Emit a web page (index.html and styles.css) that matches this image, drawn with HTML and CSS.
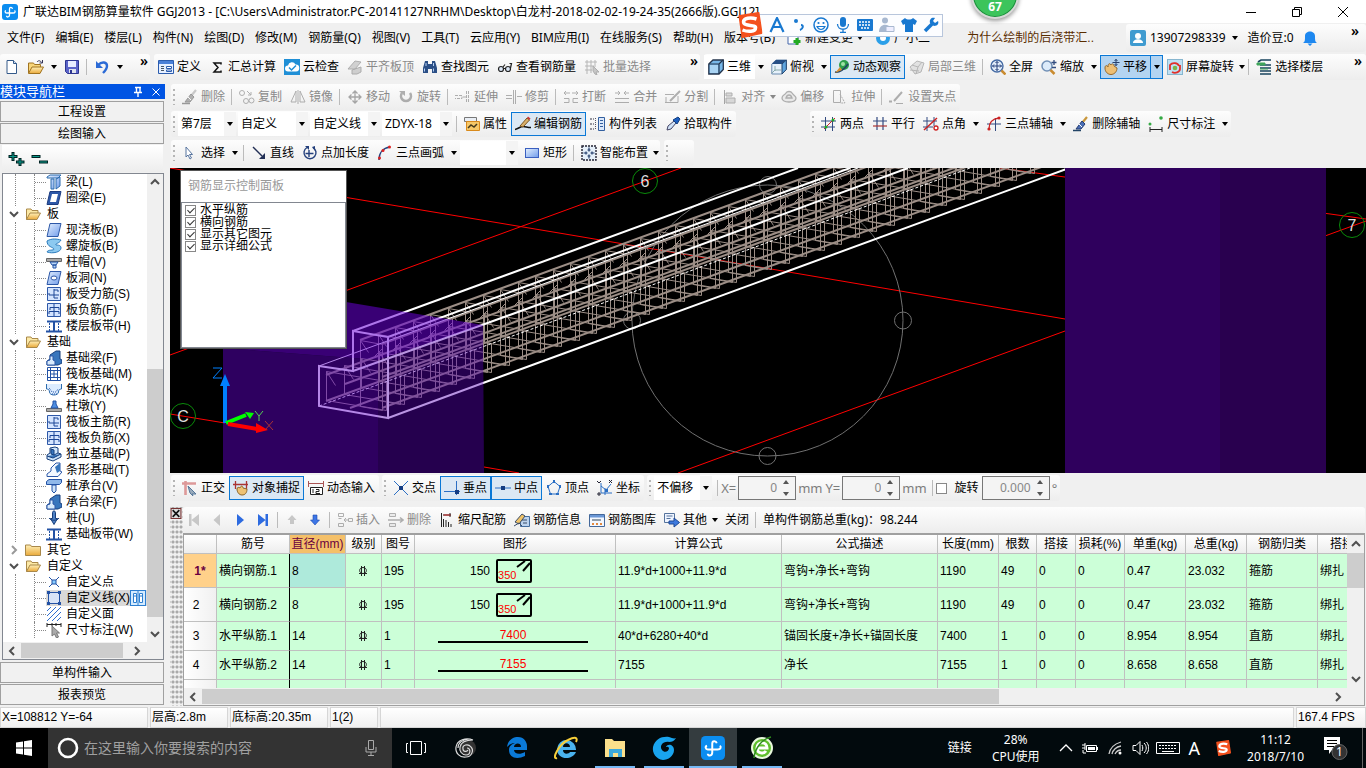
FILE: index.html
```html
<!DOCTYPE html>
<html lang="zh-CN">
<head>
<meta charset="utf-8">
<title>广联达BIM钢筋算量软件 GGJ2013</title>
<link rel="stylesheet" href="styles.css">
</head>
<body>
<svg class="defs" aria-hidden="true">
<defs>
<linearGradient id="gb" x1="0" y1="0" x2="1" y2="1"><stop offset="0" stop-color="#e4f0ff"/><stop offset="1" stop-color="#6f9bea"/></linearGradient>
<linearGradient id="gy" x1="0" y1="0" x2="0" y2="1"><stop offset="0" stop-color="#fff0b8"/><stop offset="1" stop-color="#e9a93a"/></linearGradient>
<symbol id="logo" viewBox="0 0 16 16"><rect width="16" height="16" rx="3" fill="#0b8df0"/><path d="M10.500 4.800C10 3 7.500 3 7.500 5v6c0 2.500-3 2.500-3 .8M4 6.500C2.500 7 3 9 4.500 9H11c2.500 0 2.500-2 1.500-2.500" fill="none" stroke="#fff" stroke-width="1.300"/></symbol>
<symbol id="new" viewBox="0 0 16 16"><path d="M3 1.500h6.500l3 3v10H3z" fill="#fff" stroke="#345a8a"/><path d="M9.500 1.500v3h3" fill="#cfe0f5" stroke="#345a8a"/></symbol>
<symbol id="open" viewBox="0 0 16 16"><path d="M.5 14V4h5l1 1.500h6V8" fill="#f7d57a" stroke="#a07320"/><path d="M.5 14.500L4 8h11.500L12 14.500z" fill="url(#gy)" stroke="#a07320"/><path d="M9 3c1.500-2 3.500-1.500 4.500.5M14.500 1v3h-3" fill="none" stroke="#335"/></symbol>
<symbol id="save" viewBox="0 0 16 16"><path d="M1.500 1.500h13v13h-11l-2-2z" fill="#5b63c8" stroke="#2d3590"/><path d="M4 2h8v6H4z" fill="#e8ecff"/><path d="M5 10h7v4H5z" fill="#dfe3ee"/><path d="M6 11h2v3H6z" fill="#2d3590"/></symbol>
<symbol id="undo" viewBox="0 0 16 16"><path d="M4 6c4-4 9-3 9 1 0 3-2 5-4 7" fill="none" stroke="#2c6bd6" stroke-width="2.400"/><path d="M2 2v7h7z" fill="#2c6bd6"/></symbol>
<symbol id="define" viewBox="0 0 16 16"><path d="M.5 1.500h15v13H.5z" fill="#e6efff" stroke="#2b5cae"/><path d="M1 2h14v3H1z" fill="#4a80d8"/><path d="M3 7.500h3M3 9.500h3M3 11.500h3" stroke="#456"/><path d="M8.500 7.500h5v2h-5zM8.500 11h5v1.500h-5z" fill="#fff" stroke="#2b5cae"/></symbol>
<symbol id="sigma" viewBox="0 0 16 16"><path d="M12 5.500V4H5l4 4.500L5 13h7v-1.500" fill="none" stroke="#111" stroke-width="1.500"/></symbol>
<symbol id="cloud" viewBox="0 0 16 16"><rect width="16" height="16" fill="#1f8fd6"/><path d="M4 12.500a3 3 0 0 1 0-6 4 4 0 0 1 7.500-1A3.500 3.500 0 0 1 12 12.500z" fill="#fff"/><path d="M5 8.500l2.500 2.500L12 6.500" fill="none" stroke="#1f8fd6" stroke-width="1.500"/></symbol>
<symbol id="slab" viewBox="0 0 16 16"><path d="M1 10l7-8 6 1-6 7zM5 15v-4l9-3v5l-4 2z" fill="#aaa" stroke="#666"/></symbol>
<symbol id="find" viewBox="0 0 16 16"><path d="M3 2h3v3h4V2h3l2 7v5h-5v-4H6v4H1V9z" fill="#2b4f86"/><path d="M2.500 9.500v3M11.500 9.500v3M4 4v3M11.500 4v3" stroke="#b5d0f5"/></symbol>
<symbol id="glass" viewBox="0 0 16 16"><g fill="#dce8f8" stroke="#222" stroke-width="1.200"><circle cx="4" cy="10" r="2.500"/><circle cx="11" cy="10" r="2.500"/><path d="M6.500 9.500h2M13.500 9l1-4.500h-2M6 8l2-2.500" fill="none"/></g></symbol>
<symbol id="batch" viewBox="0 0 16 16"><path d="M1 3h12M1 7h9M1 11h7M3 1v14M7 1v13M11 1v7" stroke="#777"/><path d="M9 7l6 6-3 0 1 3-2-1-2-3z" fill="#999" stroke="#666"/></symbol>
<symbol id="cube" viewBox="0 0 16 16"><path d="M.8 5L5 1h10.300v9.500L11 15H.8z" fill="#78b7e8" stroke="#24344c" stroke-width="1.300"/><path d="M1 5h10v10M11 5l4-4" fill="none" stroke="#24344c" stroke-width="1.200"/><path d="M2 6h8v8H2z" fill="#a9d3f3"/></symbol>
<symbol id="topv" viewBox="0 0 16 16"><path d="M.8 5L5 1h10.300v9.500L11 15H.8z" fill="#e6f1fb" stroke="#6a8aae"/><path d="M.8 5L5 1h10.300L11 5z" fill="#264f86"/><path d="M11 5l4.300-4v9.500L11 15z" fill="#5fa5df" stroke="#24446c"/><path d="M4 12V7m-3 7l3-3h6" stroke="#8aa" fill="none"/></symbol>
<symbol id="orbit" viewBox="0 0 16 16"><circle cx="10" cy="6" r="5" fill="#2e9e4c"/><circle cx="9" cy="5" r="2" fill="#9fe2a4"/><path d="M1 13c4 1 10-3 13-8" stroke="#246" fill="none" stroke-width="1.500"/><path d="M1 14l5-6 2 3z" fill="#d98f2f"/></symbol>
<symbol id="local3" viewBox="0 0 16 16"><path d="M1 8l7-6 7 2-3 9-6 2z" fill="#ccc" stroke="#777"/><path d="M3 6l6 2 4-5M9 8l-2 7M1 11l9 1" fill="none" stroke="#777"/></symbol>
<symbol id="full" viewBox="0 0 16 16"><circle cx="7" cy="7" r="6" fill="#e4effb" stroke="#456ba4" stroke-width="1.400"/><path d="M7 2.500v9M2.500 7h9M5.500 4L7 2.500 8.500 4M5.500 10L7 11.500 8.500 10M4 5.500L2.500 7 4 8.500M10 5.500L11.500 7 10 8.500" stroke="#223c78" fill="none"/><path d="M11.500 11.500l4 4" stroke="#c98b2f" stroke-width="2.500"/></symbol>
<symbol id="zoom" viewBox="0 0 16 16"><circle cx="6" cy="7" r="5" fill="#dcebfa" stroke="#7291b7" stroke-width="1.500"/><path d="M9.500 11l4 4" stroke="#c98b2f" stroke-width="2.500"/><path d="M13 1v5M10.500 3.500h5M11 8.500h4" stroke="#334d80" stroke-width="1.300"/></symbol>
<symbol id="pan" viewBox="0 0 16 16"><path d="M1 9c0-3 2-3 3-1 0-4 2-4 3-2 1-2 3-1 3 1l3 2c0 4-3 6.500-6 6.500S1 13 1 9z" fill="#edbf74" stroke="#95692b"/><path d="M12 0v7M8.500 3.500h7M10.500 2L12 .5 13.500 2M10.500 5L12 6.500 13.500 5" stroke="#27406c" fill="none"/></symbol>
<symbol id="srot" viewBox="0 0 16 16"><rect x=".5" y=".5" width="15" height="15" fill="#bfe0f3" stroke="#87b6cf"/><path d="M3 11V6a5 4 0 0 1 9 1M13 6v4a5 4 0 0 1-8 3" fill="none" stroke="#e2302a" stroke-width="1.800"/><circle cx="8" cy="9" r="2.300" fill="#7ab648"/></symbol>
<symbol id="floors" viewBox="0 0 16 16"><path d="M2 3l3-2h10M4 6h11M4 9h11M4 12h11M4 15h11" stroke="#19445e" stroke-width="1.600" fill="none"/><path d="M1 4h8v2H1zM4 10h8" fill="#3fa55a" stroke="#3fa55a"/></symbol>
<symbol id="brush" viewBox="0 0 16 16"><path d="M14 1l-5 6" stroke="#c9973b" stroke-width="2.200"/><path d="M9 5l3 3-4 5H3z" fill="#4b6fb5" stroke="#243b70"/><path d="M6 8l3 3" stroke="#fff"/><path d="M0 14.500h8" stroke="#246" stroke-width="1.500"/></symbol>
<symbol id="copy" viewBox="0 0 16 16"><g fill="none" stroke="#666"><circle cx="3" cy="4" r="2.500"/><circle cx="7" cy="12" r="2.500"/><circle cx="12.500" cy="11.500" r="2.500"/><path d="M8 2l4 4M12 3v3H9"/></g></symbol>
<symbol id="mirror" viewBox="0 0 16 16"><path d="M6 2v11H1zM10 2v11h5zM8 1v14" fill="none" stroke="#666"/></symbol>
<symbol id="move" viewBox="0 0 16 16"><path d="M8 2v12M2 8h12M5.500 4.500L8 2l2.500 2.500M5.500 11.500L8 14l2.500-2.500M4.500 5.500L2 8l2.500 2.500M11.500 5.500L14 8l-2.500 2.500" stroke="#555" fill="none" stroke-width="1.300"/></symbol>
<symbol id="rotate" viewBox="0 0 16 16"><path d="M4 4a5 5 0 1 0 8 0" fill="none" stroke="#666" stroke-width="2.600"/><path d="M1 2h6v5z" fill="#666"/></symbol>
<symbol id="extend" viewBox="0 0 16 16"><path d="M0 6.500h7v3H0M13.500 2v12M11.500 2v12M8 8h3" stroke="#666" fill="none" stroke-dasharray="3 1"/></symbol>
<symbol id="trim" viewBox="0 0 16 16"><path d="M0 6.500h6M0 9.500h6M7.500 1v14M9.500 1v14M11 7.500h5" stroke="#666" fill="none"/></symbol>
<symbol id="brk" viewBox="0 0 16 16"><path d="M1 4h6M9 4h6M3 2L1 4l2 2M13 2l2 2-2 2M1 9.500h5v4H1M15 9.500h-5v4h5" stroke="#666" fill="none"/></symbol>
<symbol id="join" viewBox="0 0 16 16"><path d="M1 4h5M10 4h5M4 2l2 2-2 2M12 2l-2 2 2 2M1 9.500h14M1 13.500h14" stroke="#666" fill="none"/></symbol>
<symbol id="split" viewBox="0 0 16 16"><path d="M0 5.500h9M0 13.500h13V7M1 8v5" stroke="#666" fill="none"/><path d="M5 12L15 2" stroke="#666" stroke-width="2"/></symbol>
<symbol id="align" viewBox="0 0 16 16"><path d="M2.500 1v14" stroke="#555"/><path d="M4 4h6v3H4zM4 9h9v5H4z" fill="#bbb" stroke="#666"/></symbol>
<symbol id="offset" viewBox="0 0 16 16"><path d="M1 9c0-3 3-3 4-5s5-2 6 0 4 3 4 5-2 4-7 4-7-2-7-4zM5 9c1-4 5-4 6 0z" fill="#ddd" stroke="#666" stroke-width="1.300"/></symbol>
<symbol id="stretch" viewBox="0 0 16 16"><path d="M1.500 1.500h7v12h-7z" fill="none" stroke="#666"/><path d="M8 5l5 9H8" stroke="#666" fill="none" stroke-dasharray="2 1"/></symbol>
<symbol id="grip" viewBox="0 0 16 16"><path d="M0 12.500h3M5 12L13 3" stroke="#666" stroke-width="2"/><path d="M7 14.500h7" stroke="#666"/></symbol>
<symbol id="prop" viewBox="0 0 16 16"><path d="M.5 1.500h12v4H.5z" fill="#e9eef5" stroke="#777"/><path d="M2.500 14.500V5.500h13v9z" fill="#f6c869" stroke="#d98a1c"/><path d="M4 12l3-3 3 2 3-3" stroke="#44391c" fill="none" stroke-width="1.500"/></symbol>
<symbol id="editbar" viewBox="0 0 16 16"><path d="M0 13.500c4-1 5-3 8-3s4 1 8 1" stroke="#111" fill="none" stroke-width="1.500"/><path d="M5 10l7-8 2.500 2L8 11z" fill="#d9b06a" stroke="#7b5520"/><path d="M12 2l2.500 2 1-1.500L13 .5z" fill="#c33"/></symbol>
<symbol id="list" viewBox="0 0 16 16"><path d="M0 3h4M0 8h4M0 13h4" stroke="#334" stroke-dasharray="2 1"/><path d="M8.500 1.500h6v13h-6z" fill="#dbe8fb" stroke="#335f9f"/><path d="M10 4.500h3M10 7.500h3M10 10.500h3" stroke="#335f9f"/><path d="M5.500 2v12" stroke="#556" stroke-dasharray="1 1"/></symbol>
<symbol id="pick" viewBox="0 0 16 16"><path d="M2 14l1-4 6-5 2 2-5 6z" fill="#cfe2f7" stroke="#446"/><path d="M8 4l4 4 3-5-2-2z" fill="#1d5fc0" stroke="#123e80"/></symbol>
<symbol id="twop" viewBox="0 0 16 16"><path d="M0 5h15M0 11h14M4.500 1v14M11.500 1v14" stroke="#334a80"/><path d="M3 13L14 2" stroke="#c22"/><circle cx="5" cy="11" r="1.500" fill="#2a2"/><circle cx="12" cy="4" r="1.500" fill="#2a2"/></symbol>
<symbol id="para" viewBox="0 0 16 16"><path d="M1 5h14M5 1v13M11 1v13" stroke="#334a80" stroke-width="1.200"/><path d="M1 10h14" stroke="#a33" stroke-width="1.200"/></symbol>
<symbol id="angle" viewBox="0 0 16 16"><path d="M0 5h14M0 11h10M4 1v14M11 1v9" stroke="#334a80"/><path d="M1 14L14 2" stroke="#c22" stroke-width="1.400"/><circle cx="13" cy="12" r="2" fill="#fff" stroke="#c22" stroke-width="1.300"/></symbol>
<symbol id="arcaxis" viewBox="0 0 16 16"><path d="M1 8h14M9.500 2v13" stroke="#334a80"/><path d="M3 13C3 6 6 3 13 2" stroke="#c22" fill="none" stroke-width="1.400"/><circle cx="3" cy="13" r="1.600" fill="#c22"/><circle cx="13" cy="2" r="1.600" fill="#c22"/></symbol>
<symbol id="dim" viewBox="0 0 16 16"><path d="M2 11v5M14 11v5M2 13.500h12" stroke="#222"/><circle cx="2" cy="8" r="1.500" fill="#3a4"/><circle cx="13" cy="2" r="1.800" fill="#3a4"/></symbol>
<symbol id="ptr" viewBox="0 0 16 16"><path d="M4 2v10l2-2 2 4 1.500-1-2-3.500h3z" fill="#fff" stroke="#57749f"/></symbol>
<symbol id="line" viewBox="0 0 16 16"><path d="M2 2l9 9" stroke="#222f55" stroke-width="1.400"/><path d="M14 14H8l6-6z" fill="#222f55"/></symbol>
<symbol id="plen" viewBox="0 0 16 16"><path d="M5 2.500a6 6 0 1 0 6 0M7 5v7M3.500 8.500h8" stroke="#24407c" fill="none" stroke-width="1.400"/><path d="M3 1h4v4zM13 1v5l-3-4z" fill="#24407c"/></symbol>
<symbol id="arc" viewBox="0 0 16 16"><path d="M2 15C2 8 6 3 13 2" stroke="#24407c" fill="none" stroke-width="1.500"/><circle cx="2.500" cy="13" r="1.500" fill="#d22"/><circle cx="6" cy="5.500" r="1.500" fill="#d22"/><circle cx="12.500" cy="2" r="1.500" fill="#d22"/></symbol>
<symbol id="rect" viewBox="0 0 16 16"><rect x="1.500" y="3.500" width="13" height="9" fill="url(#gb)" stroke="#3a5fc0"/></symbol>
<symbol id="smart" viewBox="0 0 16 16"><rect x="1" y="1" width="14" height="14" fill="#e6f0fa" stroke="#223" stroke-width="1.400" stroke-dasharray="2 1"/><path d="M8 2.500v4M8 9.500v4M2.500 8h4M9.500 8h4M6.500 5h3M6.500 11h3M5 6.500v3M11 6.500v3" stroke="#223c6c" stroke-width="1.200"/></symbol>
<symbol id="ortho" viewBox="0 0 16 16"><path d="M0 3.500h14M3.500 1v14" stroke="#d99" stroke-width="2.600"/><path d="M6 6l8 8h-4l1 2-3-3z" fill="#9ab" stroke="#579"/></symbol>
<symbol id="snap" viewBox="0 0 16 16"><path d="M0 4.500h15M2.500 1v8M13.500 1v8" stroke="#a33" stroke-width="1.300"/><path d="M4 9c0-2 2-2 3-1 1-3 3-2 3 0l4 1c0 4-2 6-5 6s-5-3-5-6z" fill="#eec274" stroke="#8d652a"/></symbol>
<symbol id="dyn" viewBox="0 0 16 16"><path d="M.5 1v6M15.500 1v6M1 3.500h14" stroke="#a55" fill="none"/><path d="M2.500 7.500h12v7h-12z" fill="#fff" stroke="#222"/><path d="M5 9v4M8 9.500h3v2H8v2h4" stroke="#222" fill="none"/></symbol>
<symbol id="cross" viewBox="0 0 16 16"><path d="M1 1l14 14M15 1L1 15" stroke="#2b6fc4"/><rect x="6" y="6" width="4" height="4" fill="#153d82"/></symbol>
<symbol id="perp" viewBox="0 0 16 16"><path d="M0 11.500h16M12.500 1v14" stroke="#2b6fc4"/><rect x="11" y="10" width="4" height="4" fill="#153d82"/></symbol>
<symbol id="midp" viewBox="0 0 16 16"><path d="M0 8h16" stroke="#2b6fc4"/><rect x="6" y="6" width="4" height="4" fill="#153d82"/></symbol>
<symbol id="vert" viewBox="0 0 16 16"><path d="M8 1.500l6 5-2.500 7.500h-7L2 6.500z" fill="none" stroke="#2b6fc4"/><path d="M7 0h2v3H7zM13 5h2v3h-2zM1 5h2v3H1zM3 13h3v2H3zM10 13h3v2h-3z" fill="#2b6fc4"/></symbol>
<symbol id="coord" viewBox="0 0 16 16"><path d="M4 3v10h11M4 6l5 4 5-6M8 8v7" stroke="#2b6fc4" fill="none"/><path d="M0 1l2 2 2-2M12 0l3 3M15 0l-3 3M1 13h2v2H1z" stroke="#223" fill="none"/><path d="M8 9h3v3H8z" fill="#2b6fc4"/></symbol>
<symbol id="first" viewBox="0 0 16 16"><path d="M3 2h2.500v12H3zM13 2v12L5.500 8z" fill="#999"/></symbol>
<symbol id="prev" viewBox="0 0 16 16"><path d="M11 2v12L4.500 8z" fill="#999"/></symbol>
<symbol id="next" viewBox="0 0 16 16"><path d="M5 2v12L12 8z" fill="#2d6be0"/></symbol>
<symbol id="last" viewBox="0 0 16 16"><path d="M3 2v12L10.500 8zM10.500 2H13v12h-2.500z" fill="#2d6be0"/></symbol>
<symbol id="up" viewBox="0 0 16 16"><path d="M8 3l4.500 5H10v4H6V8H3.500z" fill="#999"/></symbol>
<symbol id="down" viewBox="0 0 16 16"><path d="M8 13l4.500-5H10V3H6v5H3.500z" fill="#3d76e6" stroke="#1d4cb0" stroke-width=".6"/></symbol>
<symbol id="ins" viewBox="0 0 16 16"><path d="M1.500 1.500h5v3h-5zM1.500 11.500h5v3h-5zM1.500 6.500h3M7 8h4M11.500 6.500h4v3h-4zM9 6L7 8l2 2" stroke="#666" fill="none"/></symbol>
<symbol id="del" viewBox="0 0 16 16"><path d="M1.500 1.500h6v3h-6zM1.500 11.500h6v3h-6z" stroke="#666" fill="#ddd"/><path d="M0 8h15M12 5.500L15 8l-3 2.500" stroke="#666" fill="none" stroke-width="1.500"/></symbol>
<symbol id="scale" viewBox="0 0 16 16"><path d="M2.500 1v14M4 3h8M11 1v4" stroke="#222"/><path d="M4.500 3h7" stroke="#c22"/><path d="M4.500 7v8M7 8v7M9.500 10v5M12 12v3" stroke="#222"/></symbol>
<symbol id="info" viewBox="0 0 16 16"><path d="M6.500 4.500h9v10h-9z" fill="#bcd3ee" stroke="#446d9e"/><path d="M1 10l7-8 3 2-6 8z" fill="#f0c46a" stroke="#3b4c66"/><path d="M0 14l5-3 3 3M8 8h5M9 11h4" fill="none" stroke="#3b4c66"/></symbol>
<symbol id="lib" viewBox="0 0 16 16"><path d="M.5 2.500h15v12H.5z" fill="#f2f7ff" stroke="#44689a"/><path d="M1 3h14v2.500H1z" fill="#6a97d6"/><path d="M3 8h9" stroke="#345"/><path d="M3 12h2m2 0h2m2 0h2" stroke="#d60" stroke-width="1.500"/></symbol>
<symbol id="other" viewBox="0 0 16 16"><path d="M.5 1.500h10v9H.5zM2.500 4h6M2.500 6.500h4" fill="#eef4ff" stroke="#55739c"/><path d="M5 9h5V6l5.500 4.500L10 15v-3H5z" fill="#3d79dd" stroke="#1e4894"/></symbol>
<symbol id="fopen" viewBox="0 0 16 16"><path d="M1.500 13.500V3h4.500l1 1.500h6V7" fill="#fce9a6" stroke="#a98849"/><path d="M1.500 13.500L5 7h10.500L12 13.500z" fill="url(#gy)" stroke="#a98849"/></symbol>
<symbol id="fshut" viewBox="0 0 16 16"><path d="M.5 13.500V3h5l1 1.500h9v9z" fill="url(#gy)" stroke="#a98849"/></symbol>
<symbol id="beam" viewBox="0 0 16 16"><path d="M1 3l3-2h11l-3 3H1zM5 5h3v10H5zM10 5l4-2v9l-4 3z" fill="url(#gb)" stroke="#2d6cae"/></symbol>
<symbol id="ring" viewBox="0 0 16 16"><path d="M4 1.500h11L12 14.500H1z" fill="#2d58a8" stroke="#1c3c80"/><path d="M6 4h6l-2 8H4z" fill="#fff"/></symbol>
<symbol id="plate" viewBox="0 0 16 16"><path d="M4 1.500h11L12 14.500H1z" fill="url(#gb)" stroke="#2d58a8"/></symbol>
<symbol id="spiral" viewBox="0 0 16 16"><path d="M1 3c5-3 10-2 14-1-2 4-6 3-5 5 2 0 5 0 5 3 0 4-8 6-14 4 1-3 7-1 7-3C7 9 1 9 1 3z" fill="#8cc9f0" stroke="#2d7cbd"/></symbol>
<symbol id="cap" viewBox="0 0 16 16"><path d="M.5 4.500h15v3H.5z" fill="#aaa" stroke="#666"/><path d="M4 8h8l-2 3H6zM7 11h3v3H7z" fill="#b9d5f5" stroke="#2352a5"/></symbol>
<symbol id="hole" viewBox="0 0 16 16"><path d="M4 1.500h11L12 14.500H1z" fill="url(#gb)" stroke="#2d58a8"/><ellipse cx="8" cy="8" rx="3" ry="2" fill="#fff" stroke="#2d58a8"/></symbol>
<symbol id="bars" viewBox="0 0 16 16"><path d="M1.500 1.500h13v13h-13z" fill="#d5e5ff" stroke="#2d58a8"/><path d="M3 9h10M3 9V7M8 3v9M8 4h4v2M8 12h4" fill="none" stroke="#1c4696"/></symbol>
<symbol id="nbar" viewBox="0 0 16 16"><path d="M1.500 1.500h13v13h-13z" fill="#d5e5ff" stroke="#2d58a8"/><path d="M4 8V5.500h9V8M3 12v-2.500h10V12M8 2v12" fill="none" stroke="#1c4696"/></symbol>
<symbol id="strip" viewBox="0 0 16 16"><path d="M0 13.500h16M1 3.500h14M8 4v9" stroke="#2352a5" stroke-width="2"/><path d="M3.500 5v8M12.500 5v8" stroke="#2352a5" stroke-dasharray="2 1"/></symbol>
<symbol id="fbeam" viewBox="0 0 16 16"><path d="M1 15v-4l3-2V5l6-4h4v8l2 1v3l-4 2z" fill="#3876bd" stroke="#173f7c"/><path d="M1 15v-4l3-1V6h3v4l2 1v4z" fill="#d9ebfc" stroke="#2d58a8"/></symbol>
<symbol id="raft" viewBox="0 0 16 16"><path d="M1.500 1.500h13v13h-13zM4.500 1v14M8 4v8M11.500 1v14M1 4.500h14M4 8h8M1 11.500h14" fill="none" stroke="#2352a5"/></symbol>
<symbol id="pit" viewBox="0 0 16 16"><path d="M.5 2v5c2 0 3 1 3 3 0 4 9 4 9 0 0-2 1-3 3-3V2" fill="#dcecff" stroke="#2d6cae"/><path d="M3 6l1 1 2 3h4l2-3M6 12h5" stroke="#2352a5" fill="none" stroke-dasharray="1 1"/></symbol>
<symbol id="pier" viewBox="0 0 16 16"><path d="M.5 10.500h15v3H.5z" fill="#aaa" stroke="#666"/><path d="M7 3h3v3l2 4H5l2-4z" fill="#4d8de0" stroke="#2352a5"/></symbol>
<symbol id="iso" viewBox="0 0 16 16"><path d="M1 9l3-2V2l5-1 3 1v5l3 1v3l-8 4-6-2z" fill="#cfe4fa" stroke="#173f7c"/><path d="M5 3v5l3 1V4zM8 9l4-2M1 10l6 2 8-4" fill="#3876bd" stroke="#173f7c"/></symbol>
<symbol id="stripf" viewBox="0 0 16 16"><path d="M1 14.500V12l4-3V6l5-5h4v8l2 1-4 4.500z" fill="#f2f8ff" stroke="#2d58a8"/><path d="M9 5l5-4v8l-3 2z" fill="#3876bd"/></symbol>
<symbol id="pcap" viewBox="0 0 16 16"><path d="M.5 3.500L3 1.500h12.500v3l-2 2H.5z" fill="#8fb8ea" stroke="#2352a5"/><path d="M6 7h4v6l-2 2-2-2z" fill="#cfe4fa" stroke="#2352a5"/></symbol>
<symbol id="pile" viewBox="0 0 16 16"><path d="M6.500 2.500c0-2 3-2 3 0v6h2L8 14.500 4.500 8.500h2z" fill="#4d80c4" stroke="#173f7c"/><path d="M3 8c2 3 8 3 10 0" fill="none" stroke="#173f7c"/></symbol>
<symbol id="cpt" viewBox="0 0 16 16"><path d="M3 3l10 10M13 3L3 13" stroke="#2352a5"/><path d="M6 6h4v4H6z" fill="#8cf" stroke="#2352a5"/></symbol>
<symbol id="cln" viewBox="0 0 16 16"><path d="M2.500 2.500h11v11h-11z" fill="#d8e4f7" stroke="#2352a5"/><path d="M1 1h3v3H1zM12 1h3v3h-3zM1 12h3v3H1zM12 12h3v3h-3z" fill="#2352a5"/></symbol>
<symbol id="car" viewBox="0 0 16 16"><path d="M1 5l4-4M1 10l9-9M1 15L15 1M6 15l9-9M11 15l4-4" stroke="#2f6fd0"/></symbol>
<symbol id="dimt" viewBox="0 0 16 16"><path d="M1 1v4M15 1v4M1 2.500h14M6 1v3M10 1v3" stroke="#222"/><path d="M6 4v10l2.500-2 2 4 2-1-2-4h3z" fill="#aaa" stroke="#777"/></symbol>
<symbol id="book" viewBox="0 0 16 16"><rect x=".5" y=".5" width="15" height="15" fill="#d4ebff" stroke="#2d7fd0"/><path d="M3.500 3.500h3v9h-3zM9.500 3.500h3v9h-3zM4 6h2M10 6h2M8 1v14" fill="#fff" stroke="#2d7fd0"/></symbol>
<symbol id="rebar" viewBox="0 0 10 12"><path d="M5 2.500C.5 2.500.5 8.500 5 8.500s4.500-6 0-6M3.500 1v10M6.500 1v10M1 8.500h8" fill="none" stroke="#222"/></symbol>
<symbol id="hook" viewBox="0 0 36 24"><rect x="1" y="1" width="34" height="22" rx="1" fill="none" stroke="#000" stroke-width="2"/><path d="M21 8l8-6M27 12l7-8" stroke="#000" stroke-width="2"/></symbol>
<symbol id="sogou" viewBox="0 0 26 26"><path d="M3 4L22 1l3 20L6 25z" fill="#f4511e" stroke="#f4511e" stroke-width="2" stroke-linejoin="round"/><path d="M20 7C14 5 7 6 7 10c0 5 13 2 12 6 0 4-8 4-13 2" fill="none" stroke="#fff" stroke-width="3.500"/></symbol>
</defs>
</svg>

<header class="titlebar">
  <svg class="ico"><use href="#logo"/></svg>
  <h1>广联达BIM钢筋算量软件 GGJ2013 - [C:\Users\Administrator.PC-20141127NRHM\Desktop\白龙村-2018-02-02-19-24-35(2666版).GGJ12]</h1>
  <div class="wincontrols">
    <button aria-label="最小化"><svg viewBox="0 0 12 12"><path d="M1 6.500h10" stroke="#000"/></svg></button>
    <button aria-label="还原"><svg viewBox="0 0 12 12"><path d="M1.500 3.500h7v7h-7zM3.500 3V1.500h7v7H9" fill="none" stroke="#000"/></svg></button>
    <button aria-label="关闭"><svg viewBox="0 0 12 12"><path d="M1 1l10 10M11 1L1 11" stroke="#000"/></svg></button>
  </div>
</header>

<div class="menurow">
  <nav class="menu">
    <button>文件(F)</button><button>编辑(E)</button><button>楼层(L)</button><button>构件(N)</button><button>绘图(D)</button><button>修改(M)</button><button>钢筋量(Q)</button><button>视图(V)</button><button>工具(T)</button><button>云应用(Y)</button><button>BIM应用(I)</button><button>在线服务(S)</button><button>帮助(H)</button><button>版本号(B)</button>
    <button class="with-icon"><svg class="ico" viewBox="0 0 16 16"><path d="M2 1h10v13H2z" fill="#fff" stroke="#46a"/><path d="M11 8v7M7.500 11.500h7" stroke="#2a2" stroke-width="3"/></svg>新建变更<span class="caret"></span></button>
    <button class="with-icon"><svg class="ico" viewBox="0 0 16 16"><circle cx="8" cy="8" r="7" fill="#2b9fe8"/><circle cx="8" cy="8" r="3" fill="#fff"/></svg>广小二</button>
  </nav>
  <a class="tip" href="#help">为什么绘制的后浇带汇..</a>
  <div class="account">
    <svg class="ico" viewBox="0 0 16 16"><rect width="16" height="16" rx="2" fill="#3f9bd0"/><circle cx="8" cy="6" r="3" fill="#fff"/><path d="M3 13c0-5 10-5 10 0z" fill="#fff"/></svg>
    <button>13907298339<span class="caret"></span></button>
    <span>造价豆:0</span>
    <svg class="ico bell" viewBox="0 0 16 16"><path d="M1 13c2-1 2-3 2-7C3 0 13 0 13 6c0 4 0 6 2 7zM5.500 13.500h5L8 16z" fill="#1e88f0"/></svg>
    <button class="more" aria-label="更多">»</button>
  </div>
</div>

<div class="toolrow">
  <div class="bar file">
    <button class="tb ic" aria-label="新建"><svg class="ico"><use href="#new"/></svg></button>
    <button class="tb ic" aria-label="打开"><svg class="ico"><use href="#open"/></svg></button><span class="caret wide"></span>
    <button class="tb ic" aria-label="保存"><svg class="ico"><use href="#save"/></svg></button><i class="sep"></i>
    <button class="tb ic" aria-label="撤销"><svg class="ico"><use href="#undo"/></svg></button><span class="caret wide"></span>
    <button class="more" aria-label="更多">»</button>
  </div>
  <div class="bar calc">
    <button class="tb"><svg class="ico"><use href="#define"/></svg>定义</button>
    <button class="tb"><svg class="ico"><use href="#sigma"/></svg>汇总计算</button>
    <button class="tb"><svg class="ico"><use href="#cloud"/></svg>云检查</button>
    <button class="tb" disabled><svg class="ico"><use href="#slab"/></svg>平齐板顶</button>
    <button class="tb"><svg class="ico"><use href="#find"/></svg>查找图元</button>
    <button class="tb"><svg class="ico"><use href="#glass"/></svg>查看钢筋量</button>
    <button class="tb" disabled><svg class="ico"><use href="#batch"/></svg>批量选择</button>
    <button class="more" aria-label="更多">»</button>
  </div>
  <div class="bar view">
    <button class="tb white"><svg class="ico"><use href="#cube"/></svg>三维</button><span class="caret wide"></span>
    <button class="tb"><svg class="ico"><use href="#topv"/></svg>俯视</button><span class="caret wide"></span>
    <button class="tb on"><svg class="ico"><use href="#orbit"/></svg>动态观察</button>
    <button class="tb" disabled><svg class="ico"><use href="#local3"/></svg>局部三维</button><i class="sep"></i>
    <button class="tb"><svg class="ico"><use href="#full"/></svg>全屏</button>
    <button class="tb"><svg class="ico"><use href="#zoom"/></svg>缩放</button><span class="caret wide"></span>
    <button class="tb on deep"><svg class="ico"><use href="#pan"/></svg>平移</button><span class="caret wide on deep"></span>
    <button class="tb"><svg class="ico"><use href="#srot"/></svg>屏幕旋转</button><span class="caret"></span><i class="sep"></i>
    <button class="tb"><svg class="ico"><use href="#floors"/></svg>选择楼层</button>
    <button class="more" aria-label="更多">»</button>
  </div>
</div>

<div class="main">
<aside class="nav">
  <div class="navtitle"><span>模块导航栏</span>
    <button aria-label="固定"><svg viewBox="0 0 12 12"><path d="M3 1.500h6M4.500 1.500v5M8 1.500v5M2 6.500h8M6 7v4" stroke="#fff" stroke-width="1.400"/></svg></button>
    <button aria-label="关闭"><svg viewBox="0 0 12 12"><path d="M2.500 2.500l7 7M9.500 2.500l-7 7" stroke="#fff"/></svg></button></div>
  <button class="navbtn">工程设置</button>
  <button class="navbtn">绘图输入</button>
  <div class="expand">
    <button aria-label="全部展开"><svg viewBox="0 0 17 16"><path d="M5 1v9M.5 5.500h9M12 7v8M8 11h8.500" stroke="#022" stroke-width="3"/><path d="M5 2v7M1.500 5.500h7M12 8v6M9 11h6.500" stroke="#0a9a8a"/></svg></button>
    <button aria-label="全部折叠"><svg viewBox="0 0 17 16"><path d="M.5 5.500h9M8 11h9" stroke="#022" stroke-width="3"/><path d="M1.500 5.500h7M9 11h7" stroke="#0a9a8a"/></svg></button>
  </div>
  <div class="treebox">
    <div class="treeview">
      <ul class="tree">
        <li><ul>
          <li><button><svg class="ico"><use href="#beam"/></svg>梁(L)</button></li>
          <li><button><svg class="ico"><use href="#ring"/></svg>圈梁(E)</button></li></ul></li>
        <li><button class="folder"><svg class="chev" viewBox="0 0 10 10"><path d="M1 3l4 4 4-4"/></svg><svg class="ico"><use href="#fopen"/></svg>板</button><ul>
          <li><button><svg class="ico"><use href="#plate"/></svg>现浇板(B)</button></li>
          <li><button><svg class="ico"><use href="#spiral"/></svg>螺旋板(B)</button></li>
          <li><button><svg class="ico"><use href="#cap"/></svg>柱帽(V)</button></li>
          <li><button><svg class="ico"><use href="#hole"/></svg>板洞(N)</button></li>
          <li><button><svg class="ico"><use href="#bars"/></svg>板受力筋(S)</button></li>
          <li><button><svg class="ico"><use href="#nbar"/></svg>板负筋(F)</button></li>
          <li><button><svg class="ico"><use href="#strip"/></svg>楼层板带(H)</button></li></ul></li>
        <li><button class="folder"><svg class="chev" viewBox="0 0 10 10"><path d="M1 3l4 4 4-4"/></svg><svg class="ico"><use href="#fopen"/></svg>基础</button><ul>
          <li><button><svg class="ico"><use href="#fbeam"/></svg>基础梁(F)</button></li>
          <li><button><svg class="ico"><use href="#raft"/></svg>筏板基础(M)</button></li>
          <li><button><svg class="ico"><use href="#pit"/></svg>集水坑(K)</button></li>
          <li><button><svg class="ico"><use href="#pier"/></svg>柱墩(Y)</button></li>
          <li><button><svg class="ico"><use href="#bars"/></svg>筏板主筋(R)</button></li>
          <li><button><svg class="ico"><use href="#nbar"/></svg>筏板负筋(X)</button></li>
          <li><button><svg class="ico"><use href="#iso"/></svg>独立基础(P)</button></li>
          <li><button><svg class="ico"><use href="#stripf"/></svg>条形基础(T)</button></li>
          <li><button><svg class="ico"><use href="#pcap"/></svg>桩承台(V)</button></li>
          <li><button><svg class="ico"><use href="#fbeam"/></svg>承台梁(F)</button></li>
          <li><button><svg class="ico"><use href="#pile"/></svg>桩(U)</button></li>
          <li><button><svg class="ico"><use href="#strip"/></svg>基础板带(W)</button></li></ul></li>
        <li><button class="folder"><svg class="chev shut" viewBox="0 0 10 10"><path d="M3 1l4 4-4 4"/></svg><svg class="ico"><use href="#fshut"/></svg>其它</button></li>
        <li><button class="folder"><svg class="chev" viewBox="0 0 10 10"><path d="M1 3l4 4 4-4"/></svg><svg class="ico"><use href="#fopen"/></svg>自定义</button><ul>
          <li><button><svg class="ico"><use href="#cpt"/></svg>自定义点</button></li>
          <li><button class="sel"><svg class="ico"><use href="#cln"/></svg>自定义线(X)<svg class="ico mark"><use href="#book"/></svg></button></li>
          <li><button><svg class="ico"><use href="#car"/></svg>自定义面</button></li>
          <li><button><svg class="ico"><use href="#dimt"/></svg>尺寸标注(W)</button></li></ul></li>
      </ul>
      <div class="vscroll"><svg class="chev" viewBox="0 0 10 10"><path d="M1 7l4-4 4 4"/></svg><i class="thumb"></i><svg class="chev" viewBox="0 0 10 10"><path d="M1 3l4 4 4-4"/></svg></div>
    </div>
    <div class="hscroll"><svg class="chev" viewBox="0 0 10 10"><path d="M7 1L3 5l4 4"/></svg><i class="thumb"></i><svg class="chev" viewBox="0 0 10 10"><path d="M3 1l4 4-4 4"/></svg></div>
  </div>
  <button class="navbtn">单构件输入</button>
  <button class="navbtn">报表预览</button>
</aside>

<section class="work">
  <div class="strip"><div class="bar gripped">
    <button class="tb" disabled><svg class="ico"><use href="#brush"/></svg>删除</button><i class="sep"></i>
    <button class="tb" disabled><svg class="ico"><use href="#copy"/></svg>复制</button>
    <button class="tb" disabled><svg class="ico"><use href="#mirror"/></svg>镜像</button><i class="sep"></i>
    <button class="tb" disabled><svg class="ico"><use href="#move"/></svg>移动</button>
    <button class="tb" disabled><svg class="ico"><use href="#rotate"/></svg>旋转</button><i class="sep"></i>
    <button class="tb" disabled><svg class="ico"><use href="#extend"/></svg>延伸</button>
    <button class="tb" disabled><svg class="ico"><use href="#trim"/></svg>修剪</button><i class="sep"></i>
    <button class="tb" disabled><svg class="ico"><use href="#brk"/></svg>打断</button>
    <button class="tb" disabled><svg class="ico"><use href="#join"/></svg>合并</button>
    <button class="tb" disabled><svg class="ico"><use href="#split"/></svg>分割</button><i class="sep"></i>
    <button class="tb" disabled><svg class="ico"><use href="#align"/></svg>对齐</button><span class="caret dim"></span>
    <button class="tb" disabled><svg class="ico"><use href="#offset"/></svg>偏移</button>
    <button class="tb" disabled><svg class="ico"><use href="#stretch"/></svg>拉伸</button><i class="sep"></i>
    <button class="tb" disabled><svg class="ico"><use href="#grip"/></svg>设置夹点</button>
  </div></div>
  <div class="strip tall"><div class="bar gripped">
    <label class="combo small"><select aria-label="楼层"><option>第7层</option></select><span class="caret wide"></span></label>
    <label class="combo"><select aria-label="构件类别"><option>自定义</option></select><span class="caret wide"></span></label>
    <label class="combo"><select aria-label="构件类型"><option>自定义线</option></select><span class="caret wide"></span></label>
    <label class="combo"><select aria-label="构件名称"><option>ZDYX-18</option></select><span class="caret wide"></span></label><i class="sep"></i>
    <button class="tb"><svg class="ico"><use href="#prop"/></svg>属性</button>
    <button class="tb on"><svg class="ico"><use href="#editbar"/></svg>编辑钢筋</button>
    <button class="tb"><svg class="ico"><use href="#list"/></svg>构件列表</button>
    <button class="tb"><svg class="ico"><use href="#pick"/></svg>拾取构件</button>
  </div><div class="bar gripped axis">
    <button class="tb"><svg class="ico"><use href="#twop"/></svg>两点</button>
    <button class="tb"><svg class="ico"><use href="#para"/></svg>平行</button>
    <button class="tb"><svg class="ico"><use href="#angle"/></svg>点角</button><span class="caret wide"></span>
    <button class="tb"><svg class="ico"><use href="#arcaxis"/></svg>三点辅轴</button><span class="caret wide"></span>
    <button class="tb"><svg class="ico"><use href="#brush"/></svg>删除辅轴</button>
    <button class="tb"><svg class="ico"><use href="#dim"/></svg>尺寸标注</button><span class="caret wide"></span>
  </div></div>
  <div class="strip tall"><div class="bar gripped">
    <button class="tb"><svg class="ico"><use href="#ptr"/></svg>选择</button><span class="caret wide"></span><i class="sep"></i>
    <button class="tb"><svg class="ico"><use href="#line"/></svg>直线</button>
    <button class="tb"><svg class="ico"><use href="#plen"/></svg>点加长度</button>
    <button class="tb"><svg class="ico"><use href="#arc"/></svg>三点画弧</button><span class="caret wide"></span>
    <label class="combo small"><select aria-label="半径"><option></option></select><span class="caret wide"></span></label>
    <button class="tb"><svg class="ico"><use href="#rect"/></svg>矩形</button><i class="sep"></i>
    <button class="tb"><svg class="ico"><use href="#smart"/></svg>智能布置</button><span class="caret"></span>
  </div><div class="bar gripped stub"></div></div>

  <div class="viewport">
    <svg id="scene" viewBox="170 168 1196 305" preserveAspectRatio="xMinYMin slice">
      <g stroke="#f00" fill="none">
        <path d="M170 168L565 234L1065 319M170 355L681 168M170 414L225 423M484 467L519 473M678 473L1065 331L1366 221M1000 168L1366 219"/>
      </g>
      <g fill="none" stroke="#707070"><circle cx="767.500" cy="320.500" r="135.500"/><circle cx="767.500" cy="456" r="8.500"/><circle cx="903" cy="320.500" r="8.500"/><circle cx="632" cy="320.500" r="8.500"/><circle cx="768" cy="185" r="8.500"/></g>
      <g id="mesh" fill="none" stroke="#9c8e86"></g>
      <g stroke="#fff" fill="none" stroke-width="2">
        <path d="M353 331L565 253.500L798 168M388 337L565 272L850 168M353 371L482 325L565 295L908 168M388 418L483 383L565 353L1069 168"/>
        <path d="M319 366L565 276L858 168" stroke-width="1"/>
        <path d="M319 406L565 317L970 168" stroke-width="1" stroke-dasharray="3 2"/>
        <path d="M319 366l34 5v-40l35 6v81l-69-12z"/>
      </g>
      <path d="M223 348V310H300L346 302L483 325L378 360z" fill="#6a00d8" fill-opacity=".54"/>
      <path d="M223 348L378 360V473H223z" fill="#6200cc" fill-opacity=".47"/>
      <path d="M378 360L483 325L484 473H378z" fill="#5800ba" fill-opacity=".42"/>
      <path d="M1065 168h155v305h-155z" fill="#2f005d"/><path d="M1220 168h106v305h-106z" fill="#29004f"/>
      <g fill="none" stroke="#0a8a0a"><circle cx="645" cy="181" r="12.500"/><circle cx="183" cy="416" r="12.500"/><circle cx="1352" cy="225" r="12.500"/></g>
      <g class="axisno"><text x="645" y="187">6</text><text x="183" y="422">C</text><text x="1352" y="231">7</text></g>
      <path d="M225 423v-40" stroke="#0080ff" stroke-width="4"/><path d="M225 374l5 12h-10z" fill="#0080ff"/>
      <path d="M226 423l20-8" stroke="#0f0" stroke-width="4"/><path d="M245 412l9 1-4 6z" fill="#0f0"/>
      <path d="M228 424l29 5" stroke="#f00" stroke-width="4"/><path d="M256 423l12 7-12 3z" fill="#f00"/>
      <path d="M213 368h9l-9 10h9" fill="none" stroke="#0080ff"/><path d="M255 411l4 5 4-5M259 416v5" fill="none" stroke="#5c5"/><path d="M265 421l8 9M273 421l-8 9" stroke="#a33"/>
    </svg>
    <form class="panel">
      <h2>钢筋显示控制面板</h2>
      <div class="checks">
        <label><input type="checkbox" checked>水平纵筋</label>
        <label><input type="checkbox" checked>横向钢筋</label>
        <label><input type="checkbox" checked>显示其它图元</label>
        <label><input type="checkbox" checked>显示详细公式</label>
      </div>
    </form>
  </div>

  <div class="strip snap"><div class="bar gripped">
    <button class="tb"><svg class="ico"><use href="#ortho"/></svg>正交</button>
    <button class="tb on"><svg class="ico"><use href="#snap"/></svg>对象捕捉</button>
    <button class="tb"><svg class="ico"><use href="#dyn"/></svg>动态输入</button>
  </div><div class="bar gripped">
    <button class="tb"><svg class="ico"><use href="#cross"/></svg>交点</button>
    <button class="tb on"><svg class="ico"><use href="#perp"/></svg>垂点</button>
    <button class="tb on"><svg class="ico"><use href="#midp"/></svg>中点</button>
    <button class="tb"><svg class="ico"><use href="#vert"/></svg>顶点</button>
    <button class="tb"><svg class="ico"><use href="#coord"/></svg>坐标</button>
  </div><div class="bar gripped offsets">
    <label class="combo small"><select aria-label="偏移方式"><option>不偏移</option></select><span class="caret wide"></span></label><i class="sep"></i>
    <label class="num"><b>X=</b><span class="spin"><input value="0" disabled><i></i></span><b>mm</b></label>
    <label class="num"><b>Y=</b><span class="spin"><input value="0" disabled><i></i></span><b>mm</b></label><i class="sep"></i>
    <label class="rot"><input type="checkbox">旋转</label>
    <label class="num"><span class="spin long"><input value="0.000" aria-label="角度" disabled><i></i></span><b>°</b></label>
  </div></div>

  <div class="dock">
    <div class="gutter"><button aria-label="关闭面板"><svg viewBox="0 0 10 10"><path d="M.5.5h9v9h-9z" fill="#ddd" stroke="#733"/><path d="M2 2l6 6M8 2L2 8" stroke="#111" stroke-width="1.500"/></svg></button></div>
    <div class="sheet">
      <div class="bar edit">
        <button class="tb nar" aria-label="首行" disabled><svg class="ico"><use href="#first"/></svg></button><button class="tb nar" aria-label="上一行" disabled><svg class="ico"><use href="#prev"/></svg></button><button class="tb nar" aria-label="下一行"><svg class="ico"><use href="#next"/></svg></button><button class="tb nar" aria-label="末行"><svg class="ico"><use href="#last"/></svg></button><i class="sep"></i>
        <button class="tb nar" aria-label="上移" disabled><svg class="ico"><use href="#up"/></svg></button><button class="tb nar" aria-label="下移"><svg class="ico"><use href="#down"/></svg></button><i class="sep"></i>
        <button class="tb" disabled><svg class="ico"><use href="#ins"/></svg>插入</button>
        <button class="tb" disabled><svg class="ico"><use href="#del"/></svg>删除</button>
        <button class="tb"><svg class="ico"><use href="#scale"/></svg>缩尺配筋</button>
        <button class="tb"><svg class="ico"><use href="#info"/></svg>钢筋信息</button>
        <button class="tb"><svg class="ico"><use href="#lib"/></svg>钢筋图库</button>
        <button class="tb"><svg class="ico"><use href="#other"/></svg>其他</button><span class="caret"></span>
        <button class="tb text">关闭</button><i class="sep"></i>
        <span class="total">单构件钢筋总重(kg)：98.244</span>
      </div>
      <div class="gridframe">
        <div class="gridrow">
          <div class="gridclip">
          <table>
            <colgroup><col class="w33"><col class="w73"><col class="w56"><col class="w36"><col class="w33"><col class="w201"><col class="w166"><col class="w156"><col class="w61"><col class="w38"><col class="w39"><col class="w49"><col class="w61"><col class="w61"><col class="w71"><col class="w73"></colgroup>
            <thead><tr><th></th><th>筋号</th><th class="hot">直径(mm)</th><th>级别</th><th>图号</th><th>图形</th><th>计算公式</th><th>公式描述</th><th>长度(mm)</th><th>根数</th><th>搭接</th><th>损耗(%)</th><th>单重(kg)</th><th>总重(kg)</th><th>钢筋归类</th><th>搭接形式</th></tr></thead>
            <tbody>
            <tr class="big"><th class="cur">1*</th><td class="key">横向钢筋.1</td><td class="cell">8</td><td class="mid"><svg class="rb"><use href="#rebar"/></svg></td><td>195</td><td><div class="stirrup">150<span><svg><use href="#hook"/></svg><em>350</em></span></div></td><td>11.9*d+1000+11.9*d</td><td>弯钩+净长+弯钩</td><td>1190</td><td>49</td><td>0</td><td>0</td><td>0.47</td><td>23.032</td><td>箍筋</td><td>绑扎</td></tr>
            <tr class="big"><th>2</th><td class="key">横向钢筋.2</td><td>8</td><td class="mid"><svg class="rb"><use href="#rebar"/></svg></td><td>195</td><td><div class="stirrup">150<span><svg><use href="#hook"/></svg><em>350</em></span></div></td><td>11.9*d+1000+11.9*d</td><td>弯钩+净长+弯钩</td><td>1190</td><td>49</td><td>0</td><td>0</td><td>0.47</td><td>23.032</td><td>箍筋</td><td>绑扎</td></tr>
            <tr><th>3</th><td class="key">水平纵筋.1</td><td>14</td><td class="mid"><svg class="rb"><use href="#rebar"/></svg></td><td>1</td><td><div class="straight">7400</div></td><td>40*d+6280+40*d</td><td>锚固长度+净长+锚固长度</td><td>7400</td><td>1</td><td>0</td><td>0</td><td>8.954</td><td>8.954</td><td>直筋</td><td>绑扎</td></tr>
            <tr><th>4</th><td class="key">水平纵筋.2</td><td>14</td><td class="mid"><svg class="rb"><use href="#rebar"/></svg></td><td>1</td><td><div class="straight">7155</div></td><td>7155</td><td>净长</td><td>7155</td><td>1</td><td>0</td><td>0</td><td>8.658</td><td>8.658</td><td>直筋</td><td>绑扎</td></tr>
            <tr><th></th><td class="key"></td><td></td><td></td><td></td><td></td><td></td><td></td><td></td><td></td><td></td><td></td><td></td><td></td><td></td><td></td></tr>
            </tbody>
          </table>
          </div>
          <div class="vscroll grid"><svg class="chev" viewBox="0 0 10 10"><path d="M1 7l4-4 4 4"/></svg><i class="thumb"></i><svg class="chev" viewBox="0 0 10 10"><path d="M1 3l4 4 4-4"/></svg></div>
        </div>
        <div class="hscroll grid"><svg class="chev" viewBox="0 0 10 10"><path d="M7 1L3 5l4 4"/></svg><i class="thumb"></i><svg class="chev" viewBox="0 0 10 10"><path d="M3 1l4 4-4 4"/></svg></div>
      </div>
    </div>
  </div>
</section>
</div>

<footer class="status"><span class="s-pos">X=108812 Y=-64</span><span class="s-h">层高:2.8m</span><span class="s-b">底标高:20.35m</span><span class="s-n">1(2)</span><span class="s-fill"></span><span class="s-fps">167.4 FPS</span></footer>

<div class="taskbar">
  <button class="start" aria-label="开始"><svg viewBox="0 0 16 16"><path d="M0 2.500l7-1v6H0zM8 1.300L16 0v7.500H8zM0 8.500h7v6l-7-1zM8 8.500h8V16l-8-1.300z" fill="#fff"/></svg></button>
  <div class="search"><svg class="ring" viewBox="0 0 22 22"><circle cx="11" cy="11" r="9" fill="none" stroke="#fff" stroke-width="2.600"/></svg><input placeholder="在这里输入你要搜索的内容" aria-label="搜索"><svg class="mic" viewBox="0 0 12 18"><path d="M3.500 1.500h5v9h-5zM1 8v5h10V8M6 13v3M3 16.500h6" fill="none" stroke="#aaa"/></svg></div>
  <button class="app" aria-label="任务视图"><svg viewBox="0 0 24 24"><path d="M6.500 5.500h11v13h-11zM4 7.500H2.500v9H4M20 7.500h1.500v9H20" fill="none" stroke="#fff"/></svg></button>
  <button class="app" aria-label="应用"><svg viewBox="0 0 24 24"><circle cx="15" cy="12" r="8" fill="#333"/><path d="M20 4C13 1 4 4 3 11c-1 6 4 11 10 10 6 0 8-7 5-10-3-4-9-2-8 2 0 3 4 3 5 1M20 4c-6 0-12 2-13 7-1 4 2 8 6 8 5 0 5-7 1-7M16 3C9 4 5 7 5 12" fill="none" stroke="#ddd" stroke-width="1.200"/></svg></button>
  <button class="app wide-gap" aria-label="Edge"><svg viewBox="0 0 24 24"><path d="M2 11C3 4 8 1 13 1c6 0 9 5 9 9v4H9c0 4 6 5 11 2v4c-8 4-16 2-16-6 0-4 3-6 6-7-4 0-6 2-8 4zM9 11h7c0-5-7-4-7 0z" fill="#0b7ad8"/></svg></button>
  <button class="app" aria-label="Internet Explorer"><svg viewBox="0 0 24 24"><path d="M3 13a9.500 9.500 0 1 1 19 1H9c0 5 6 4 7 2h6c-4 9-19 8-19-3zM9 11h7c0-5-7-5-7 0z" fill="#4ab3ee"/><path d="M3 22C-3 24 5 8 14 4c8-4 10-2 8 2" fill="none" stroke="#f7cf3a" stroke-width="2"/></svg></button>
  <button class="app run" aria-label="文件资源管理器"><svg viewBox="0 0 24 24"><path d="M2 3h7l2 2h11v16H2z" fill="#fbe08b"/><path d="M6 13h13v8h-4v-4h-5v4H6z" fill="#3ca9dc"/></svg></button>
  <button class="app run" aria-label="广联达"><svg viewBox="0 0 24 24"><path d="M24 2c-2 3-4 4-7 4-6-1-10 4-7 8 2 3 7 2 7-2-1-2-2-1-3-1 2-4 8-2 8 3 0 6-6 10-11 10C4 23 0 17 1 11 3 3 10 0 17 1c3 1 5 2 7 1z" fill="#19a4ee"/></svg></button>
  <button class="app run cur" aria-label="GGJ2013"><svg viewBox="0 0 16 16"><use href="#logo"/></svg></button>
  <button class="app run" aria-label="浏览器"><svg viewBox="0 0 24 24"><circle cx="12" cy="12" r="10" fill="#5fbf2c" stroke="#e8f8dc" stroke-width="2"/><path d="M7 12h10c0-7-10-7-10 0 0 6 7 6 9 3" fill="none" stroke="#fff" stroke-width="3"/><path d="M4 22C5 12 12 3 21 1" stroke="#2f8d1d" stroke-width="1.500" fill="none"/></svg></button>
  <span class="link">链接</span>
  <span class="cpu">28%<br>CPU使用</span>
  <div class="tray">
    <svg viewBox="0 0 16 16" class="t14"><path d="M2 11l6-6 6 6" fill="none" stroke="#fff" stroke-width="1.300"/></svg>
    <svg viewBox="0 0 18 16"><path d="M5.500 5.500h10v6h-10zM16.500 7v3M1 5h3M1 8h3M4 3v7M2 10v3h3" fill="none" stroke="#fff"/><path d="M7 7h7v3H7z" fill="#fff"/></svg>
    <svg viewBox="0 0 18 16"><path d="M3 14C4 8 8 4 15 2M6 14c1-4 4-7 9-8M9 14c1-2 3-4 6-4" fill="none" stroke="#ccc" stroke-width="1.300"/><circle cx="14" cy="13" r="1.500" fill="#fff"/></svg>
    <svg viewBox="0 0 18 16"><path d="M2 5.500h3l4-4v13l-4-4H2zM11 5c1 2 1 4 0 6M13 3c3 3 3 7 0 10M15.500 2c3 4 3 8 0 12" fill="none" stroke="#fff"/></svg>
    <svg viewBox="0 0 24 16" class="kb"><path d="M.5 2.500h23v11H.5z" fill="none" stroke="#fff"/><path d="M3 5.500h18M3 8.500h18" stroke="#fff" stroke-dasharray="2 1"/><path d="M6 11.500h12" stroke="#fff"/></svg>
    <b>A</b>
    <svg viewBox="0 0 26 26" class="t14"><use href="#sogou"/></svg>
  </div>
  <span class="clock">11:12<br>2018/7/10</span>
  <button class="note" aria-label="通知"><svg viewBox="0 0 26 26"><path d="M2 2h16v13H10l-3 4v-4H2z" fill="#fff"/><path d="M5 5.500h10M5 8.500h10M5 11.500h7" stroke="#000"/><circle cx="17.500" cy="17" r="7.500" fill="#333" stroke="#666"/><text x="17.500" y="21" text-anchor="middle">1</text></svg></button>
  <i class="peek"></i>
</div>

<div class="ball">67</div>
<div class="ime">
  <svg class="s" viewBox="0 0 26 26"><use href="#sogou"/></svg>
  <svg viewBox="0 0 16 16"><path d="M1.500 15L8 1l6.500 14M4 10h8" fill="none" stroke="#1878d0" stroke-width="2.200"/></svg>
  <svg viewBox="0 0 16 16"><circle cx="5" cy="4" r="2" fill="#1878d0"/><path d="M10 8c3 0 2 4-1 5" stroke="#1878d0" stroke-width="2" fill="none"/></svg>
  <svg viewBox="0 0 16 16"><circle cx="8" cy="8" r="7" fill="none" stroke="#1878d0" stroke-width="1.500"/><circle cx="5.500" cy="6" r="1.100" fill="#1878d0"/><circle cx="10.500" cy="6" r="1.100" fill="#1878d0"/><path d="M4 9.500c2 4 6 4 8 0z" fill="none" stroke="#1878d0" stroke-width="1.200"/></svg>
  <svg viewBox="0 0 16 16"><rect x="5" y="0" width="6" height="10" rx="3" fill="#1878d0"/><path d="M2.500 7c0 7 11 7 11 0M8 12v4M5 15.500h6" fill="none" stroke="#1878d0" stroke-width="1.300"/></svg>
  <svg viewBox="0 0 16 16"><rect x="0" y="2" width="16" height="12" rx="1" fill="#1878d0"/><path d="M2 5h12M2 8h12M4 11h8" stroke="#fff" stroke-width="1.300" stroke-dasharray="2 1"/></svg>
  <svg viewBox="0 0 16 16"><circle cx="6" cy="3.500" r="3" fill="#a8b8d0"/><path d="M0 15c0-9 10-9 12-3v3z" fill="#a8b8d0"/><path d="M7 9.500h8v5H7z" fill="#eef" stroke="#a8b8d0"/></svg>
  <svg viewBox="0 0 16 16"><path d="M4 1c2 2 6 2 8 0l4 3-2 4-2-1v8H4V7L2 8 0 4z" fill="#1878d0"/></svg>
  <svg viewBox="0 0 16 16"><path d="M2 14l8-8" stroke="#1878d0" stroke-width="3.500"/><path d="M15 4l-3 2-2-2 2-3c-3-1-6 1-5 5l4 3c4 0 5-3 4-5z" fill="#1878d0"/></svg>
</div>
<script src="app.js"></script>
</body>
</html>
```
FILE: styles.css
```css
* { box-sizing: border-box; }
html, body { height: 100%; }
body {
  margin: 0; display: flex; flex-direction: column; overflow: hidden;
  background: #f0f0f0; color: #000;
  font: 12px/16px "Noto Sans", "Noto Sans CJK SC", sans-serif;
}
button, input, select { font: inherit; color: inherit; margin: 0; padding: 0; border: 0; background: none; white-space: nowrap; }
ul { list-style: none; margin: 0; padding: 0; }
svg { display: block; flex: none; }
.defs { position: absolute; width: 0; height: 0; }
.ico { width: 16px; height: 16px; }

.titlebar { height: 23px; flex: none; display: flex; align-items: center; background: #fff; padding-left: 2px; }
.titlebar h1 { flex: 1; margin: 0 0 0 5px; font-size: 12px; font-weight: 400; white-space: nowrap; }
.wincontrols { display: flex; }
.wincontrols button { width: 46px; height: 22px; display: flex; align-items: center; justify-content: center; }
.wincontrols svg { width: 12px; height: 12px; }

.menurow { height: 30px; flex: none; display: flex; align-items: center; }
.menu { display: flex; gap: 11px; padding-left: 7px; flex: 1; }
.with-icon { display: flex; align-items: center; gap: 3px; }
.tip { color: #5a2d00; text-decoration: none; margin-right: 32px; font-family: "Liberation Sans", "Noto Sans CJK SC", sans-serif; }
.account { display: flex; align-items: center; gap: 4px; width: 240px; height: 28px; padding: 0 3px 0 4px; background: linear-gradient(#fdfdfd, #ececec); border-radius: 3px; }
.account button { display: flex; align-items: center; }
.account span { margin-right: 3px; }
.more { margin-left: auto; align-self: flex-start; width: 12px; font-size: 14px; font-weight: 600; line-height: 14px; }
.bell { margin-left: 1px; }

.caret { width: 8px; display: flex; justify-content: center; align-items: center; }
.caret::before { content: ""; border: 3px solid transparent; border-top: 4px solid #000; border-bottom: 0; }
.caret.wide { width: 12px; }
.caret.dim::before { border-top-color: #888; }
.account .caret { width: 18px; margin: 0; }

.toolrow { height: 28px; flex: none; display: flex; gap: 4px; padding: 1px 0; }
.bar { display: flex; align-items: center; background: linear-gradient(#fdfdfd, #ededed); border-radius: 3px; white-space: nowrap; }
.bar.file { width: 150px; }
.bar.calc { width: 546px; }
.bar.view { flex: 1; }
.bar.view .more { margin-right: 2px; }
.tb { display: flex; align-items: center; gap: 3px; padding: 0 4px; height: 24px; }
.tb:disabled { color: #8a8a8a; }
.tb:disabled .ico { filter: grayscale(1) opacity(.5); }
.tb.nar { padding: 0 3px; width: 23px; }
.tb.white { background: #fff; }
.on { background: #dbe8f4; box-shadow: inset 0 0 0 1px #0a78d6; }
.on.deep { background: #b3d4f1; height: 24px; }
.caret.wide.on { margin-left: -1px; width: 13px; }
.sep { width: 6px; height: 16px; flex: none; background: linear-gradient(#bbb, #bbb) 2px 0 / 1px 100% no-repeat; }

.main { flex: 1; min-height: 0; display: flex; }
.nav { width: 166px; flex: none; padding: 3px 1px 2px 0; display: flex; flex-direction: column; gap: 1px; font-family: "Liberation Sans", "Noto Sans CJK SC", sans-serif; }
.navtitle { height: 15px; margin-bottom: 1px; display: flex; align-items: center; gap: 6px; background: #0054e3; color: #fff; font-size: 13px; padding-right: 3px; }
.navtitle span { flex: 1; }
.navtitle svg { width: 12px; height: 12px; }
.navbtn { height: 21px; flex: none; border: 1px solid #a0a0a0; background: #f1f1f1; margin-right: 1px; }
.expand { height: 27px; flex: none; display: flex; gap: 6px; padding: 5px 6px; margin: 0 2px; background: linear-gradient(#fff, #ededed); }
.expand svg { width: 17px; height: 16px; }
.treebox { flex: 1; min-height: 0; display: flex; flex-direction: column; margin: 0 1px 1px 2px; border: 1px solid #828790; background: #fff; }
.treeview { flex: 1; min-height: 0; display: flex; overflow: hidden; }
.tree { flex: 1; min-width: 0; overflow: hidden; }
.tree button { display: flex; align-items: center; height: 16px; gap: 4px; padding-right: 2px; }
.tree .folder { padding-left: 6px; gap: 6px; }
.tree ul { margin-left: 12px; border-left: 1px dotted #888; }
.tree ul li { display: flex; align-items: center; margin-left: 18px; border-left: 1px dotted #888; }
.tree ul li::before { content: ""; width: 11px; flex: none; border-top: 1px dotted #888; }
.tree .sel { background: #d9d9d9; }
.tree .mark { margin-left: -4px; }
.chev { width: 10px; height: 10px; fill: none; stroke: #505050; stroke-width: 2; }
.chev.shut { stroke: #999; }
.vscroll { width: 16px; flex: none; display: flex; flex-direction: column; align-items: center; padding: 3px 0; background: #f0f0f0; }
.vscroll .thumb { flex: 1; width: 100%; margin: 182px 0 12px; background: #cdcdcd; }
.hscroll { height: 17px; flex: none; display: flex; align-items: center; padding: 1px 4px; background: #f0f0f0; }
.hscroll .thumb { width: 102px; height: 15px; margin: 0 9px 0 4px; background: #cdcdcd; }

.work { flex: 1; min-width: 0; display: flex; flex-direction: column; padding-top: 3px; }
.strip { flex: none; height: 26px; display: flex; padding-left: 5px; }
.strip.tall { height: 29px; padding-top: 1px; padding-bottom: 2px; }
.gripped::before { content: ""; width: 3px; height: 16px; margin: 0 2px; background: linear-gradient(#b5b5b5 2px, transparent 2px) 0 0 / 2px 5px repeat-y; }
.axis { margin-left: 74px; }
.stub { width: 30px; margin-left: 4px; }
.combo { display: flex; align-items: stretch; width: 70px; height: 24px; margin-right: 2px; background: #fff; }
.combo.small { width: 58px; }
.combo select { appearance: none; flex: 1; min-width: 0; padding-left: 3px; }
.combo .caret { background: #f4f4f4; }

.viewport { flex: 1; min-height: 0; position: relative; margin-left: 4px; background: #000; overflow: hidden; }
#scene { width: 100%; height: 100%; }
.axisno { fill: #ddd; font: 16px "Liberation Sans", sans-serif; text-anchor: middle; }
.panel { position: absolute; left: 10px; top: 2px; width: 167px; height: 179px; display: flex; flex-direction: column; background: #fff; border: 1px solid #555; font-family: "Liberation Sans", "Noto Sans CJK SC", sans-serif; }
.panel h2 { margin: 7px 7px 8px; font-size: 12px; font-weight: 400; color: #999; }
.checks { flex: 1; border: 1px solid #828790; padding: 1px 3px; }
.checks label { display: flex; align-items: center; gap: 4px; height: 12px; line-height: 12px; white-space: nowrap; }
input[type="checkbox"] { appearance: none; width: 11px; height: 11px; border: 1px solid #888; background: #fff; display: flex; align-items: center; justify-content: center; }
input[type="checkbox"]:checked::after { content: ""; width: 3px; height: 6px; margin-bottom: 2px; border: solid #333; border-width: 0 1px 1px 0; transform: rotate(45deg); }

.snap { height: 30px; padding-top: 2px; padding-bottom: 2px; gap: 3px; }
.offsets .combo { margin-right: 3px; }
.num, .rot { display: flex; align-items: center; gap: 2px; }
.num { color: #7d7d7d; font-size: 13px; padding-right: 3px; }
.num b { font-weight: 400; }
.rot { gap: 8px; padding: 0 3px 0 0; }
.spin { display: flex; align-items: center; width: 58px; height: 24px; border: 1px solid #777; background: #f4f4f4; }
.spin.long { width: 68px; }
.spin input { flex: 1; min-width: 0; text-align: right; color: #888; font-size: 12px; }
.spin i { width: 18px; height: 16px; display: flex; flex-direction: column; align-items: center; justify-content: space-between; }
.spin i::before, .spin i::after { content: ""; border: 3px solid transparent; }
.spin i::before { border-top: 0; border-bottom: 4px solid #555; }
.spin i::after { border-bottom: 0; border-top: 4px solid #555; }

.dock { flex: none; display: flex; margin-left: 4px; padding: 4px 1px 1px 0; }
.gutter { width: 13px; flex: none; background: radial-gradient(circle at 2px 2px, #aaa 1px, transparent 2px) 1px 3px / 4px 5px; }
.gutter svg { width: 12px; height: 11px; background: #f0f0f0; }
.sheet { flex: 1; min-width: 0; }
.edit { height: 26px; }
.tb.text { padding-left: 6px; }
.total { padding-left: 4px; }
.gridframe { border: 1px solid #a0a0a0; border-top-width: 2px; background: #fff; }
.gridrow { display: flex; height: 153px; }
.gridclip { flex: 1; min-width: 0; overflow: hidden; }
table { table-layout: fixed; border-collapse: separate; border-spacing: 0; width: 1207px; font-family: "Liberation Sans", "Noto Sans CJK SC", sans-serif; }
.w33 { width: 33px; } .w36 { width: 36px; } .w38 { width: 38px; } .w39 { width: 39px; } .w49 { width: 49px; } .w56 { width: 56px; } .w61 { width: 61px; } .w71 { width: 71px; } .w73 { width: 73px; } .w156 { width: 156px; } .w166 { width: 166px; } .w201 { width: 201px; }
th, td { padding: 0; border-right: 1px solid #c0c0c0; border-bottom: 1px solid #c0c0c0; font-weight: 400; white-space: nowrap; overflow: hidden; }
thead th { height: 19px; background: linear-gradient(#fff, #ededed); }
thead .hot { background: #f4c069; color: #6a0040; }
tbody tr { height: 29px; }
tbody tr.big { height: 34px; }
tbody th { background: linear-gradient(90deg, #fff, #f0f0f0); padding-right: 8px; }
tbody .cur { background: #ffd18a; color: #6a0040; font-weight: 700; padding: 0; }
td { background: #ccffd8; padding-left: 2px; }
td.key { border-right-color: #000; }
td.cell { background: #aeeadb; }
.mid { padding-left: 12px; }
.rb { width: 10px; height: 12px; }
.stirrup { display: flex; align-items: center; gap: 6px; padding-left: 53px; }
.stirrup span { position: relative; }
.stirrup svg { width: 36px; height: 24px; }
.stirrup em, .straight { color: #f00; font-style: normal; }
.stirrup em { position: absolute; left: 2px; bottom: 0; font-size: 11px; }
.straight { width: 150px; margin: 0 auto 0 21px; border-bottom: 2px solid #000; text-align: center; line-height: 12px; }
.vscroll.grid { width: 17px; padding: 4px 0; }
.vscroll.grid .thumb { flex: none; height: 35px; margin: 4px 0 auto; }
.hscroll.grid .thumb { width: 69%; margin: 0 auto 0 4px; }
.hscroll.grid { padding-right: 21px; }

.status { height: 21px; flex: none; display: flex; gap: 2px; font-family: "Liberation Sans", "Noto Sans CJK SC", sans-serif; }
.status span { border: 1px solid #d6d6d6; background: linear-gradient(#fff, #f0f0f0); padding: 1px; white-space: nowrap; }
.s-pos { width: 148px; } .s-h { width: 78px; } .s-b { width: 98px; } .s-n { width: 48px; } .s-fill { flex: 1; } .s-fps { width: 70px; }

.taskbar { height: 40px; flex: none; display: flex; align-items: center; background: #020a0d; color: #fff; }
.taskbar > button { display: flex; align-items: center; justify-content: center; height: 40px; }
.taskbar .start { width: 48px; background: #000; }
.start svg { width: 16px; height: 16px; }
.search { width: 344px; height: 40px; display: flex; align-items: center; gap: 5px; padding: 0 15px 0 9px; background: #333; }
.ring { width: 22px; height: 22px; }
.search input { flex: 1; min-width: 0; font-size: 14px; }
.search input::placeholder { color: #a0a0a0; opacity: 1; }
.mic { width: 12px; height: 18px; }
.app { width: 48px; margin-right: 1px; box-shadow: none; }
.app.wide-gap { margin-left: 3px; }
.app svg { width: 24px; height: 24px; }
.app.run { background: linear-gradient(#76b9f5, #76b9f5) 50% 100% / 40px 2px no-repeat; }
.app.run.cur { background: linear-gradient(#76b9f5, #76b9f5) 50% 100% / 100% 2px no-repeat #343c3f; }
.link { margin-left: auto; }
.cpu, .clock { text-align: center; line-height: 17px; }
.cpu { margin: 0 18px 0 20px; }
.tray { display: flex; align-items: center; gap: 7px; }
.tray svg { width: 18px; height: 16px; }
.tray .t14 { width: 16px; height: 16px; }
.tray .kb { width: 24px; }
.tray b { font-size: 18px; font-weight: 400; margin: 0 8px 0 2px; }
.clock { margin-left: 16px; }
.note { margin: 0 14px 0 18px; }
.note svg { width: 26px; height: 26px; }
.note text { fill: #fff; font: 12px "Noto Sans", sans-serif; }
.peek { width: 4px; height: 40px; border-left: 1px solid #666; }

.ball { position: absolute; top: -29px; left: 971px; width: 48px; height: 48px; padding-top: 26px; border-radius: 50%; border: 2px solid #d8d8d8; background: #3cc45c; color: #fff; font-weight: 700; text-align: center; line-height: 16px; box-shadow: inset 0 0 0 1px #1d8a3c, 0 2px 4px #999; }
.ime { position: absolute; top: 12px; left: 736px; display: flex; align-items: center; gap: 6px; height: 26px; width: 207px; isolation: isolate; }
.ime::before { content: ""; position: absolute; inset: 2px 0 1px 14px; z-index: -1; background: #fcfdff; border: 1px solid #b8c6dc; }
.ime svg { width: 16px; height: 16px; }
.ime .s { width: 27px; height: 26px; }
```
FILE: app.js
```js
// Builds the reinforcement cage of the beam: longitudinal bars plus stirrups
// repeated along the beam axis.
const NS = "http://www.w3.org/2000/svg";
const mesh = document.getElementById("mesh");
const SLOPE = -0.3655;
const END = 1110;

function add(d, width) {
  const p = document.createElementNS(NS, "path");
  p.setAttribute("d", d);
  p.setAttribute("stroke-width", width);
  mesh.appendChild(p);
}

// start points of the longitudinal bars on the front section
const bars = [[360, 340], [382, 344], [326, 375], [345, 384], [382, 377], [326, 401], [350, 408], [382, 408]];
bars.forEach(([x, y]) => add(`M${x} ${y}L${END} ${y + (END - x) * SLOPE}`, 2));

const STEP = 17.5;
for (let i = 0; i < 49; i++) {
  const dx = i * STEP;
  const dy = dx * SLOPE;
  const at = (x, y) => `${Math.round(x + dx) + 0.5} ${Math.round(y + dy) + 0.5}`;
  add(`M${at(360, 340)}L${at(382, 344)}L${at(382, 410)}L${at(360, 406)}Z`, 1);
  add(`M${at(326, 371)}L${at(386, 381)}L${at(386, 410)}L${at(326, 400)}Z`, 1);
  add(`M${at(326, 371)}l9 14M${at(360, 340)}l8 12M${at(374, 356)}l8 -8`, 1);
}
```
